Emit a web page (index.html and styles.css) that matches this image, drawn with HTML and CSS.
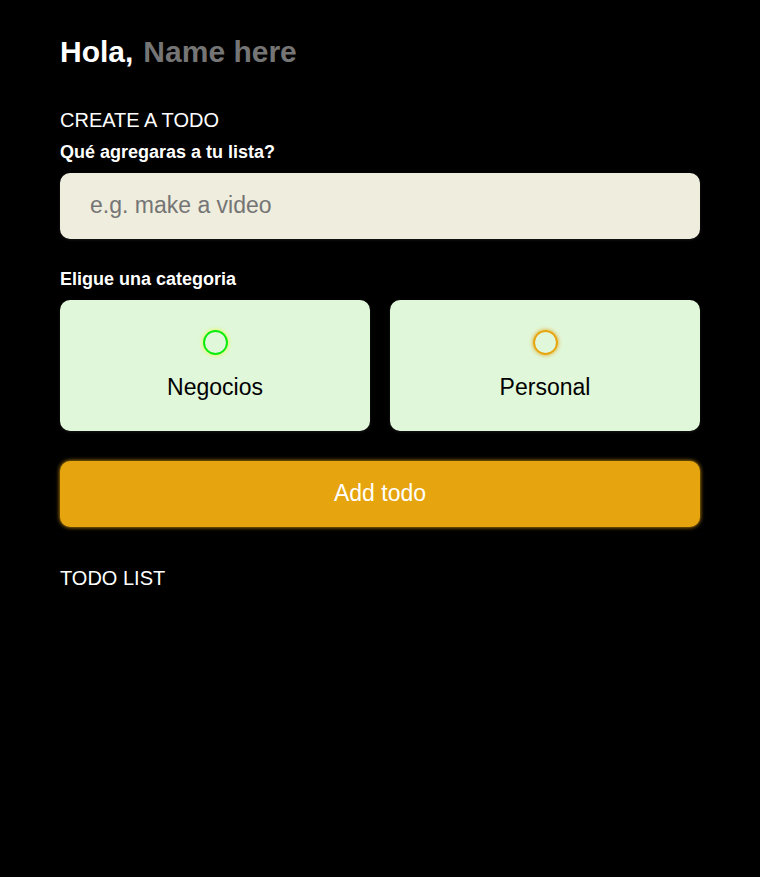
FILE: index.html
```
<!DOCTYPE html>
<html lang="es">
<head>
  <meta charset="utf-8">
  <meta name="viewport" content="width=device-width, initial-scale=1">
  <title>Todo</title>
  <link rel="stylesheet" href="styles.css">
</head>
<body>
  <main class="app">
    <section class="greeting">
      <h2 class="title">
        <label for="name">Hola,</label>
        <input type="text" id="name" placeholder="Name here">
      </h2>
    </section>
    <section class="create-todo">
      <h3>CREATE A TODO</h3>
      <form id="new-todo-form">
        <label class="question" for="content">Qué agregaras a tu lista?</label>
        <input type="text" id="content" placeholder="e.g. make a video">
        <h4 class="question" id="category-title">Eligue una categoria</h4>
        <div class="options" role="radiogroup" aria-labelledby="category-title">
          <label class="option">
            <input type="radio" name="category" value="business">
            <span>Negocios</span>
          </label>
          <label class="option personal">
            <input type="radio" name="category" value="personal">
            <span>Personal</span>
          </label>
        </div>
        <button type="submit">Add todo</button>
      </form>
    </section>
    <section class="todo-list">
      <h3>TODO LIST</h3>
    </section>
  </main>
</body>
</html>
```
FILE: styles.css
```
:root {
  --business: #0ced0c;
  --business-glow: rgba(238, 255, 0, 0.8);
  --personal: #e6a40e;
  --glow: 0 0 4px;
  --card-shadow: 0 1px 3px rgba(224, 247, 218, 0.1);
}

* {
  box-sizing: border-box;
  margin: 0;
  padding: 0;
  font-family: "Liberation Sans", Arial, sans-serif;
}

body {
  background: #000;
  color: #fff;
}

section {
  padding: 0 60px;
}

h3 {
  font-size: 20px;
  font-weight: 400;
  line-height: 24px;
  margin-bottom: 8px;
}

.greeting {
  padding-top: 34px;
  margin-bottom: 38px;
}

.title {
  display: flex;
  gap: 10px;
  font-size: 30px;
  line-height: 36px;
}

.title input {
  flex: 1;
  min-width: 0;
  border: 0;
  outline: 0;
  background: none;
  color: #fff;
  font-size: 30px;
  font-weight: 700;
}

::placeholder {
  color: #757575;
}

.question {
  display: block;
  font-size: 18px;
  font-weight: 700;
  line-height: 24px;
  margin-bottom: 9px;
}

#content {
  display: block;
  width: 100%;
  height: 66px;
  padding: 0 30px 2px;
  border: 0;
  border-radius: 10px;
  background: #efeddd;
  box-shadow: var(--card-shadow);
  color: #000;
  font-size: 23px;
  margin-bottom: 28px;
}

.options {
  display: grid;
  grid-template-columns: 1fr 1fr;
  gap: 20px;
  margin-bottom: 30px;
}

.option {
  display: flex;
  flex-direction: column;
  align-items: center;
  gap: 18px;
  padding: 30px;
  border-radius: 10px;
  background: #e0f7da;
  box-shadow: var(--card-shadow);
  color: #000;
  font-size: 23px;
  line-height: 28px;
}

.option input {
  appearance: none;
  width: 25px;
  height: 25px;
  border: 2px solid var(--business);
  border-radius: 50%;
  box-shadow: var(--glow) var(--business-glow);
}

.personal input {
  border-color: var(--personal);
  box-shadow: var(--glow) var(--personal);
}

button {
  display: block;
  width: 100%;
  height: 66px;
  padding-bottom: 2px;
  border: 0;
  border-radius: 10px;
  background: var(--personal);
  box-shadow: var(--glow) var(--personal);
  color: #fff;
  font-size: 23px;
  cursor: pointer;
  margin-bottom: 39px;
}
```
